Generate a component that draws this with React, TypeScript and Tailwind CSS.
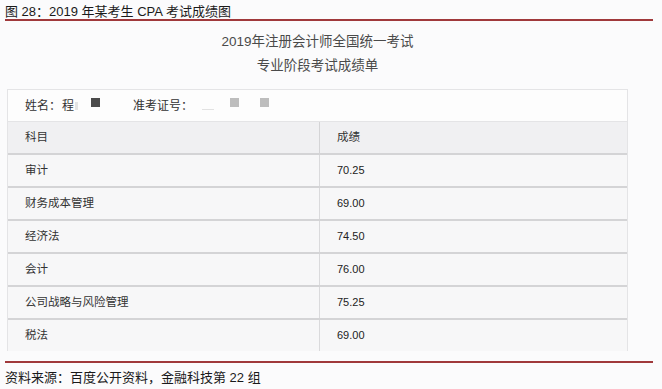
import React from "react";

const rows: [string, string][] = [
  ["审计", "70.25"],
  ["财务成本管理", "69.00"],
  ["经济法", "74.50"],
  ["会计", "76.00"],
  ["公司战略与风险管理", "75.25"],
  ["税法", "69.00"],
];

export default function App() {
  return (
    <div className="w-[662px] h-[389px] overflow-hidden bg-[#fbfbfc] font-['Liberation_Sans','Noto_Sans_CJK_SC',sans-serif] text-[#222]">
      {/* Figure title */}
      <div className="ml-[5px] w-[648px] h-[21px] border-b-2 border-[#a0393b] pt-[4px] text-[13px] leading-[15px] text-[#1a1a1a]">
        图 28：2019 年某考生 CPA 考试成绩图
      </div>

      <div className="ml-[7px] w-[621px]">
        {/* Headings */}
        <div className="mt-[9px] text-center text-[13.5px] leading-[24px] text-[#4a4a4a]">
          <div>2019年注册会计师全国统一考试</div>
          <div>专业阶段考试成绩单</div>
        </div>

        {/* Info panel */}
        <div className="mt-[11px] h-[33px] flex items-center border border-[#e4e4e6] bg-[#fdfdfd] pl-[17px] text-[12px] text-[#333]">
          <span>姓名：</span>
          <span className="ml-[1px]">程</span>
          <span className="ml-[1px] w-[3px] h-[8px] bg-[#e4e4e4]" />
          <span className="ml-[13px] w-[9px] h-[9px] bg-[#4b4b4b] blur-[0.3px] -translate-y-[3px]" />
          <span className="ml-[33px]">准考证号：</span>
          <span className="ml-[9px] w-[12px] h-[1px] bg-[#e2e2e2] translate-y-[4px]" />
          <span className="ml-[16px] w-[9px] h-[9px] bg-[#bdbdbd] blur-[0.3px] -translate-y-[3px]" />
          <span className="ml-[21px] w-[9px] h-[9px] bg-[#bdbdbd] blur-[0.3px] -translate-y-[3px]" />
        </div>

        {/* Table */}
        <div className="border-x border-[#e4e4e6] text-[11.5px] text-[#333]">
          <div className="flex h-[33px] bg-[#f0f0f2] border-b-2 border-[#d4d4d6]">
            <div className="w-[311px] pl-[17px] flex items-center">科目</div>
            <div className="flex-1 border-l border-[#d4d4d6] pl-[17px] flex items-center">成绩</div>
          </div>
          {rows.map(([name, score], i) => (
            <div
              key={name}
              className={
                i < rows.length - 1
                  ? "flex h-[33px] bg-[#f7f7f8] border-b-2 border-[#d4d4d6]"
                  : "flex h-[31px] bg-[#f7f7f8]"
              }
            >
              <div className="w-[311px] pl-[17px] flex items-center">{name}</div>
              <div className="flex-1 border-l border-[#dadadc] pl-[17px] flex items-center text-[11px] text-[#222]">
                {score}
              </div>
            </div>
          ))}
        </div>
      </div>

      {/* Footer */}
      <div className="ml-[5px] w-[648px] mt-[10px] border-t-2 border-[#a0393b] pt-[7px] text-[13px] leading-[15px] text-[#1a1a1a]">
        资料来源：百度公开资料，金融科技第 22 组
      </div>
    </div>
  );
}
